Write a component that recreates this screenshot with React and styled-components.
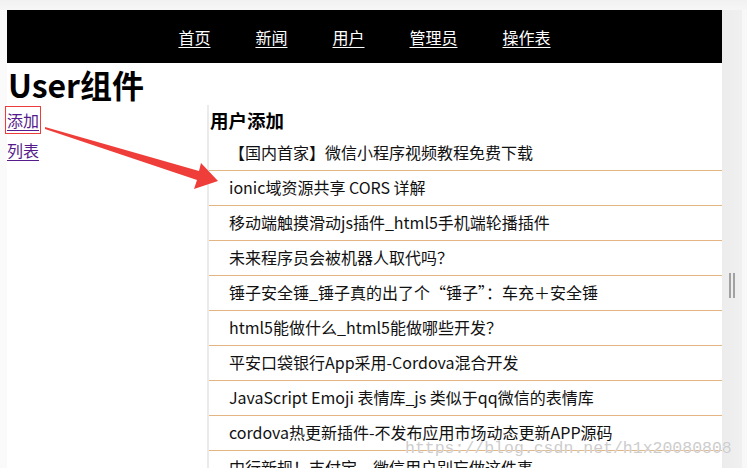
import styled, { createGlobalStyle } from "styled-components";

const GlobalStyle = createGlobalStyle`
  html, body {
    margin: 0;
    padding: 0;
    background: #f7f7f7;
    overflow: hidden;
  }
  body {
    font-family: "Noto Sans CJK SC", "Noto Sans", sans-serif;
  }
`;

// 外框
const Window = styled.div`
  position: relative;
  width: 747px;
  height: 468px;
  display: flex;
  flex-direction: column;
  overflow: hidden;
`;
const TopStrip = styled.div`
  height: 10px;
  background: linear-gradient(#f1f1f1, #f6f6f6);
`;
const Body = styled.div`
  flex: 1;
  display: flex;
  min-height: 0;
`;
const Gutter = styled.div`
  width: 7px;
  background: #fafafa;
`;
const Page = styled.div`
  flex: 1;
  background: #fff;
  display: flex;
  flex-direction: column;
  min-width: 0;
`;
const Scrollbar = styled.div`
  width: 25px;
  background: linear-gradient(90deg, #ececec 0, #f0f0f0 20px, #f8f8f8 20px);
  padding-top: 263px;
  box-sizing: border-box;
`;
const Grip = styled.div`
  margin-left: 7px;
  width: 6px;
  height: 25px;
  border-left: 2px solid #a2a2a2;
  border-right: 2px solid #a2a2a2;
  box-sizing: border-box;
`;

// 导航
const Nav = styled.nav`
  height: 53px;
  background: #000;
  display: flex;
  justify-content: center;
  align-items: center;
  gap: 45px;
`;
const NavLink = styled.a`
  color: #fff;
  font-size: 16px;
  text-decoration: underline;
  text-underline-offset: 3px;
  line-height: 20px;
`;

const Title = styled.h1`
  margin: 0;
  padding-left: 1px;
  font-size: 32px;
  font-weight: 700;
  line-height: 42px;
  height: 42px;
  color: #000;
`;

const Columns = styled.div`
  flex: 1;
  display: flex;
  min-height: 0;
`;
const Side = styled.div`
  width: 200px;
  border-right: 2px solid #ebebeb;
`;
const SideLink = styled.a`
  display: block;
  width: fit-content;
  font-size: 16px;
  line-height: 30px;
  color: #551a8b;
  text-decoration: underline;
  text-underline-offset: 3px;
`;
const Main = styled.div`
  flex: 1;
  min-width: 0;
`;
const SubTitle = styled.h3`
  margin: 0;
  padding: 2px 0 3px 1px;
  font-size: 18.5px;
  font-weight: 700;
  line-height: 26px;
`;
const List = styled.ul`
  margin: 0;
  padding: 0;
  list-style: none;
`;
const Item = styled.li`
  height: 34px;
  line-height: 33px;
  padding-left: 20px;
  font-size: 16px;
  color: #111;
  white-space: nowrap;
  border-bottom: 1px solid #e2b583;
`;

// 标注
const Mark = styled.div`
  position: absolute;
  left: 5px;
  top: 106px;
  width: 36px;
  height: 28px;
  border: 1px solid #ee3b3b;
  box-sizing: border-box;
`;
const Arrow = styled.svg`
  position: absolute;
  left: 0;
  top: 0;
  pointer-events: none;
`;
const Watermark = styled.div`
  position: absolute;
  left: 405px;
  top: 439px;
  font-family: "Liberation Mono", monospace;
  font-size: 16.5px;
  color: #cdcdcd;
  text-shadow: 0 0 1px #fff;
  pointer-events: none;
  white-space: nowrap;
`;

const links = ["首页", "新闻", "用户", "管理员", "操作表"];
const news = [
  "【国内首家】微信小程序视频教程免费下载",
  "ionic域资源共享 CORS 详解",
  "移动端触摸滑动js插件_html5手机端轮播插件",
  "未来程序员会被机器人取代吗？",
  "锤子安全锤_锤子真的出了个“锤子”：车充＋安全锤",
  "html5能做什么_html5能做哪些开发？",
  "平安口袋银行App采用-Cordova混合开发",
  "JavaScript Emoji 表情库_js 类似于qq微信的表情库",
  "cordova热更新插件-不发布应用市场动态更新APP源码",
  "中行新规！支付宝、微信用户别忘做这件事",
];

export default function App() {
  return (
    <Window>
      <GlobalStyle />
      <TopStrip />
      <Body>
        <Gutter />
        <Page>
          <Nav>
            {links.map((l) => (
              <NavLink key={l} href="#">
                {l}
              </NavLink>
            ))}
          </Nav>
          <Title>User组件</Title>
          <Columns>
            <Side>
              <SideLink href="#">添加</SideLink>
              <SideLink href="#">列表</SideLink>
            </Side>
            <Main>
              <SubTitle>用户添加</SubTitle>
              <List>
                {news.map((n) => (
                  <Item key={n}>{n}</Item>
                ))}
              </List>
            </Main>
          </Columns>
        </Page>
        <Scrollbar>
          <Grip />
        </Scrollbar>
      </Body>
      <Mark />
      <Arrow width="747" height="468" viewBox="0 0 747 468">
        <polygon
          points="45,127 199,171 201,163 218,181 194,189 197,180 45,129"
          fill="#ef3e3a"
        />
      </Arrow>
      <Watermark>https://blog.csdn.net/h1x20080808</Watermark>
    </Window>
  );
}
